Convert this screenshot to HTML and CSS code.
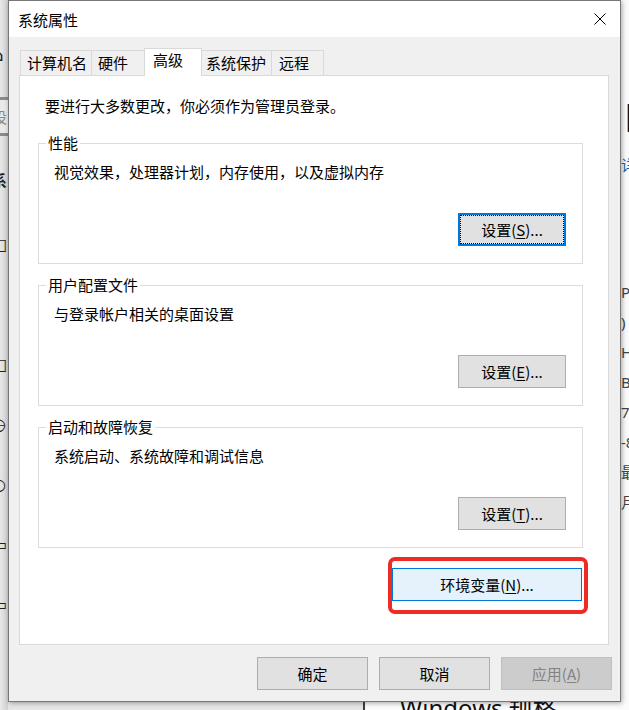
FILE: index.html
```html
<!DOCTYPE html>
<html lang="zh-CN">
<head>
<meta charset="utf-8">
<title>系统属性</title>
<link rel="stylesheet" href="styles.css">
</head>
<body>
<div class="desktop">
  <div class="bg-left">
    <div class="sidebar">
      <span class="sb-house">⌂</span>
      <div class="sb-search"><span>设</span></div>
      <span class="sb-sys">系</span>
      <div class="sb-icons">
        <span>□</span><span>)</span><span>□</span><span>◷</span><span>○</span><span>▭</span><span>▭</span><span>▯</span>
      </div>
    </div>
  </div>
  <div class="bg-right">
    <div class="frags">
      <span class="frag-big">|</span>
      <span class="frag-link">详</span>
      <div class="frag-list">
        <span>Pu</span><span>)</span><span>H</span><span>B</span><span>7</span><span>-8</span><span>最</span><span>月</span>
      </div>
    </div>
    <div class="spec-title">Windows 规格</div>
  </div>

  <div class="dialog">
    <div class="titlebar">
      <span class="title">系统属性</span>
      <svg class="close" width="12" height="12" viewBox="0 0 12 12"><path d="M0.5 0.5 L11.5 11.5 M11.5 0.5 L0.5 11.5" stroke="#000" stroke-width="1" fill="none"/></svg>
    </div>
    <div class="body">
      <div class="tabs">
        <div class="tab t1">计算机名</div>
        <div class="tab t2">硬件</div>
        <div class="tab sel">高级</div>
        <div class="tab t4">系统保护</div>
        <div class="tab t5">远程</div>
      </div>
      <div class="panel">
        <p class="intro">要进行大多数更改，你必须作为管理员登录。</p>
        <div class="group">
          <span class="legend">性能</span>
          <p class="gtext">视觉效果，处理器计划，内存使用，以及虚拟内存</p>
          <button class="btn focus">设置(<u>S</u>)...</button>
        </div>
        <div class="group">
          <span class="legend">用户配置文件</span>
          <p class="gtext">与登录帐户相关的桌面设置</p>
          <button class="btn">设置(<u>E</u>)...</button>
        </div>
        <div class="group last">
          <span class="legend">启动和故障恢复</span>
          <p class="gtext">系统启动、系统故障和调试信息</p>
          <button class="btn">设置(<u>T</u>)...</button>
        </div>
        <div class="env-row">
          <div class="env-wrap">
            <button class="btn env">环境变量(<u>N</u>)...</button>
            <span class="highlight"></span>
          </div>
        </div>
      </div>
      <div class="footer">
        <button class="btn">确定</button>
        <button class="btn">取消</button>
        <button class="btn disabled">应用(<u>A</u>)</button>
      </div>
    </div>
  </div>
</div>
</body>
</html>
```
FILE: styles.css
```css
* { box-sizing: border-box; }
html, body { margin: 0; padding: 0; }
body {
  width: 629px;
  height: 710px;
  overflow: hidden;
  font-family: "Noto Sans CJK SC", "Noto Sans", sans-serif;
  font-size: 15px;
  color: #000;
}
.desktop {
  position: relative;
  width: 629px;
  height: 710px;
  overflow: hidden;
  background: #e6e6e6;
}

/* background windows */
.bg-left {
  position: absolute;
  left: 0;
  top: 0;
  width: 363px;
  height: 710px;
  background: #e6e6e6;
  display: flex;
}
.sidebar {
  width: 8px;
  height: 100%;
  overflow: hidden;
  background: linear-gradient(to right, #e8e8e8, #d0d0d0);
  display: flex;
  flex-direction: column;
  padding-top: 45px;
  font-family: "DejaVu Sans", sans-serif;
  color: #222;
}
.sb-house { font-size: 18px; line-height: 20px; margin-left: -8px; }
.sb-search {
  margin-top: 32px;
  width: 30px;
  height: 39px;
  margin-left: -22px;
  border-top: 3px solid #8a8a8a;
  border-bottom: 3px solid #8a8a8a;
  background: #e9e9e9;
  color: #888;
  font-family: "Noto Sans CJK SC", sans-serif;
  font-size: 15px;
  line-height: 33px;
  padding-left: 14px;
}
.sb-sys {
  margin-top: 34px;
  margin-left: -9px;
  font-family: "Noto Sans CJK SC", sans-serif;
  font-weight: bold;
  font-size: 16px;
  line-height: 20px;
}
.sb-icons {
  margin-top: 45px;
  display: flex;
  flex-direction: column;
  gap: 40px;
  margin-left: -8px;
}
.sb-icons span { font-size: 16px; line-height: 20px; }

.bg-right {
  position: absolute;
  left: 363px;
  top: 0;
  right: 0;
  height: 710px;
  background: #fbfbfb;
  border-left: 2px solid #3c3c3c;
  display: flex;
  flex-direction: column;
  overflow: hidden;
}
.frags {
  display: flex;
  flex-direction: column;
  padding: 100px 0 0 256px;
  color: #333;
}
.frag-big { font-size: 28px; line-height: 28px; color: #111; font-family: "Noto Sans", sans-serif; }
.frag-link { margin-top: 27px; line-height: 20px; color: #0063b1; }
.frag-list {
  margin-top: 102px;
  display: flex;
  flex-direction: column;
  font-family: "Noto Sans", "Noto Sans CJK SC", sans-serif;
  color: #444;
}
.frag-list span { line-height: 30px; white-space: nowrap; }
.spec-title {
  margin-top: auto;
  margin-bottom: -13px;
  padding-left: 35px;
  font-family: "Noto Sans", "Noto Sans CJK SC", sans-serif;
  font-size: 24px;
  line-height: 30px;
  color: #111;
  white-space: nowrap;
}

/* dialog */
.dialog {
  position: absolute;
  left: 8px;
  top: 0;
  width: 613px;
  height: 702px;
  border: 1px solid #777;
  background: #f0f0f0;
  box-shadow: 1px 1px 5px rgba(0, 0, 0, 0.35);
  display: flex;
  flex-direction: column;
}
.titlebar {
  height: 36px;
  flex: none;
  background: #fff;
  display: flex;
  align-items: center;
  justify-content: space-between;
  padding: 0 14px 0 9px;
}
.title { line-height: 20px; margin-top: 2px; }
.close { display: block; margin-top: -1px; }

.body {
  flex: 1;
  padding: 11px 11px 0 10px;
  display: flex;
  flex-direction: column;
}
.tabs {
  display: flex;
  align-items: flex-end;
  height: 27px;
  padding-left: 1px;
  position: relative;
  z-index: 1;
}
.tab {
  height: 25px;
  border: 1px solid #d9d9d9;
  border-bottom: none;
  margin-right: -1px;
  background: #f0f0f0;
  line-height: 24px;
  padding-left: 6px;
  white-space: nowrap;
}
.t1 { width: 72px; }
.t2 { width: 54px; }
.t4 { width: 71px; padding-left: 4px; }
.t5 { width: 53px; padding-left: 7px; }
.tab.sel {
  width: 58px;
  height: 28px;
  margin-bottom: -1px;
  background: #fff;
  line-height: 22px;
  padding-left: 8px;
  position: relative;
  z-index: 2;
}

.panel {
  height: 570px;
  flex: none;
  background: #fff;
  border: 1px solid #d9d9d9;
  padding: 20px 25px 0 18px;
}
.intro {
  margin: 0 0 27px 7px;
  line-height: 20px;
}
.group {
  position: relative;
  height: 121px;
  border: 1px solid #dcdcdc;
  margin-bottom: 21px;
  padding: 18px 16px 17px 15px;
  display: flex;
  flex-direction: column;
}
.group.last { margin-bottom: 20px; }
.legend {
  position: absolute;
  top: -11px;
  left: 7px;
  padding: 0 2px;
  background: #fff;
  line-height: 20px;
}
.gtext { margin: 0; line-height: 20px; }
.group .btn { margin-top: auto; align-self: flex-end; }

.btn {
  width: 108px;
  height: 33px;
  border: 1px solid #adadad;
  background: #e1e1e1;
  font-family: inherit;
  font-size: 15px;
  color: #000;
  line-height: 31px;
  padding: 0;
  text-align: center;
  white-space: nowrap;
}
.btn u { text-underline-offset: 2px; }
.btn.focus {
  border: 2px solid #0078d7;
  outline: 1px dotted #000;
  outline-offset: -3px;
  line-height: 29px;
}
.env-row {
  display: flex;
  justify-content: flex-end;
  padding-right: 1px;
}
.env-wrap { position: relative; }
.btn.env {
  display: block;
  width: 190px;
  background: #e5f1fb;
  border-color: #0078d7;
}
.highlight {
  position: absolute;
  left: -4px;
  top: -11px;
  width: 200px;
  height: 57px;
  border: 4px solid #ee2b24;
  border-radius: 7px;
  pointer-events: none;
}

.footer {
  display: flex;
  justify-content: flex-end;
  gap: 11px;
  margin: 12px -3px 0 0;
}
.footer .btn { width: 111px; }
.btn.disabled {
  background: #cccccc;
  border-color: #bfbfbf;
  color: #838383;
}
```
